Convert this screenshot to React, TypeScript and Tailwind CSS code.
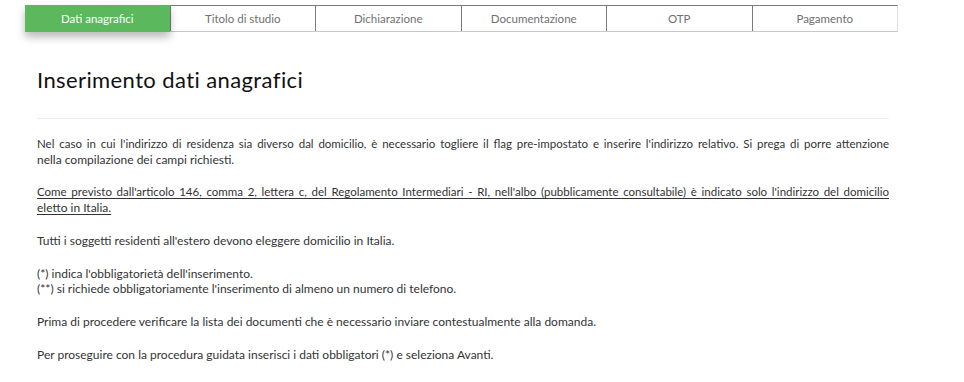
const TABS = ['Dati anagrafici', 'Titolo di studio', 'Dichiarazione', 'Documentazione', 'OTP', 'Pagamento'];

function Tabs() {
  return (
    <div className="ml-[25px] mr-[66px] mt-[5px] flex h-[27px] border-t border-t-[#7a7a7a] border-b border-b-[#c8c8c8] border-r border-r-[#dcdcdc] text-[11.5px]">
      {TABS.map((t, i) =>
        i === 0 ? (
          <div
            key={t}
            className="-mt-px -mb-px flex flex-1 items-center justify-center bg-[#5cb85c] text-white shadow-[0_5px_9px_rgba(0,0,0,0.28)] relative z-10"
          >
            {t}
          </div>
        ) : (
          <div key={t} className="flex flex-1 items-center justify-center border-l border-l-[#7a7a7a] text-[#707070]">
            {t}
          </div>
        )
      )}
    </div>
  );
}

// a line that always fills the full width
function Full({ children }: { children: React.ReactNode }) {
  return (
    <span className="block text-justify text-[11.5px] [text-align-last:justify]">{children}</span>
  );
}

export default function App() {
  return (
    <div className="min-h-[382px] bg-white font-['Lato',sans-serif] text-[12px]">
      <Tabs />
      <div className="ml-[37px] mr-[75px]">
        <h1 className="mt-[33px] text-[22px] leading-[30px] text-[#111] tracking-[0.4px]">Inserimento dati anagrafici</h1>
        <hr className="mt-[23px] border-t border-[#ececec]" />
        <div className="mt-[17px] leading-[15.7px] text-[#333]">
          <p className="mb-[17px]">
            <Full>
              Nel caso in cui l'indirizzo di residenza sia diverso dal domicilio, è necessario togliere il flag
              pre-impostato e inserire l'indirizzo relativo. Si prega di porre attenzione
            </Full>
            nella compilazione dei campi richiesti.
          </p>
          <p className="mb-[17px] underline underline-offset-2">
            <Full>
              Come previsto dall'articolo 146, comma 2, lettera c, del Regolamento Intermediari - RI, nell'albo
              (pubblicamente consultabile) è indicato solo l'indirizzo del domicilio
            </Full>
            eletto in Italia.
          </p>
          <p className="mb-[17px]">Tutti i soggetti residenti all'estero devono eleggere domicilio in Italia.</p>
          <p className="mb-[17px]">
            (*) indica l'obbligatorietà dell'inserimento.
            <br />
            (**) si richiede obbligatoriamente l'inserimento di almeno un numero di telefono.
          </p>
          <p className="mb-[17px]">
            Prima di procedere verificare la lista dei documenti che è necessario inviare contestualmente alla domanda.
          </p>
          <p className="mb-[17px]">
            Per proseguire con la procedura guidata inserisci i dati obbligatori (*) e seleziona Avanti.
          </p>
        </div>
      </div>
    </div>
  );
}
